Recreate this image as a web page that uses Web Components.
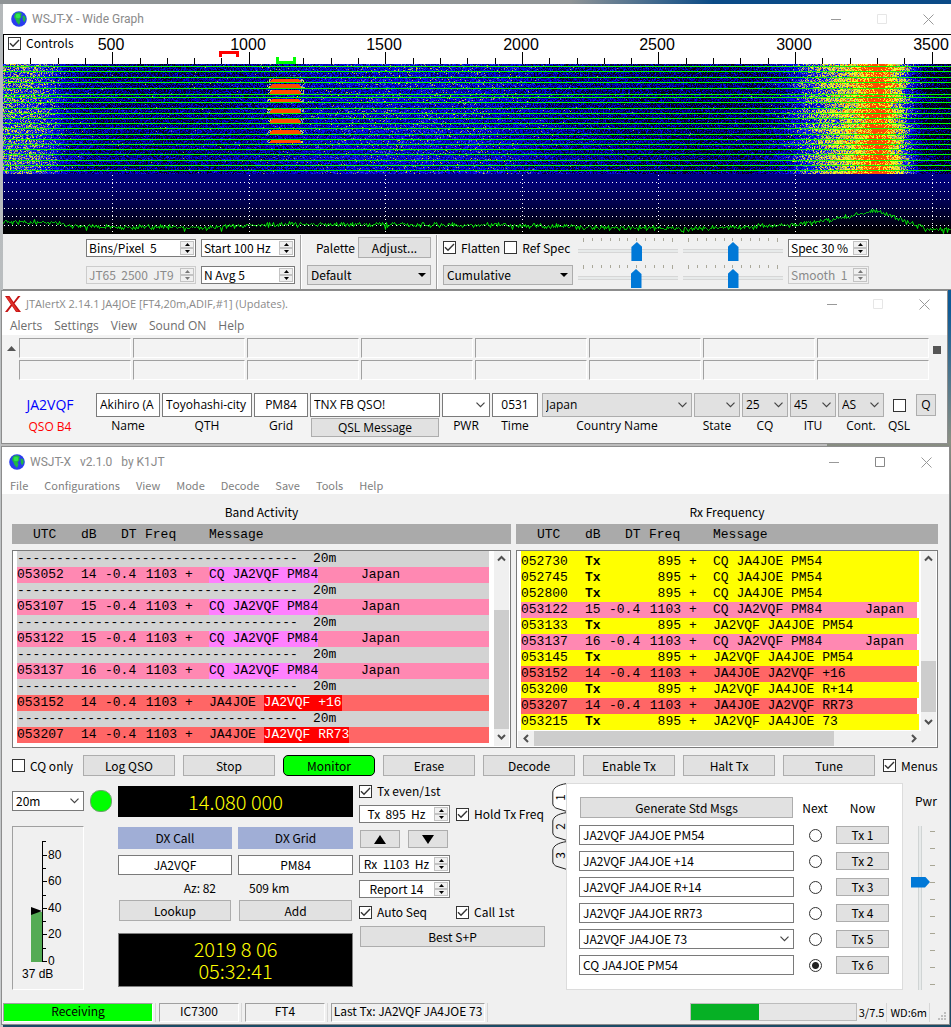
<!DOCTYPE html>
<html lang="en">
<head>
<meta charset="utf-8">
<title>WSJT-X station desktop</title>
<style>
  html { min-height: 100%; background: linear-gradient(90deg, #8f9496 0, #8f9496 60%, #0b4b87 75%, #0b4b87 100%) top / 100% 4px no-repeat, linear-gradient(#b4b8ba, #c8cbcd) left / 3px 100% no-repeat, linear-gradient(180deg, #1a5d95 0, #0d5a96 30%, #8a8f83 43%, #5e6d70 50%, #123c55 75%, #1c4b66 100%); }
  body { margin: 0; padding-top: 4px; font: 12px/16px "Noto Sans CJK JP", sans-serif; color: #000; }
  wide-graph, jt-alert, wsjtx-main { display: block; }
  wide-graph { margin-left: 3px; }
  jt-alert { margin: 0 3px 0 1px; }
  wsjtx-main { margin: 0 1px 2px 1px; padding-top: 2px; background: linear-gradient(90deg, #bcbcbc 0, #bcbcbc 87%, transparent 87%); }
</style>
</head>
<body>
<wide-graph></wide-graph>
<jt-alert></jt-alert>
<wsjtx-main></wsjtx-main>

<script>
const BASE = `*{box-sizing:border-box} button,input,select{font:inherit;color:inherit;margin:0} button{cursor:default}`;

function define(tag, markup, setup) {
  const tpl = document.createElement('template');
  customElements.define(tag, class extends HTMLElement {
    constructor() { super(); this.attachShadow({ mode: 'open' }); }
    connectedCallback() {
      if (this.ready) return;
      this.ready = true;
      tpl.innerHTML = `<style>${BASE}</style>` + (typeof markup === 'function' ? markup(this) : markup);
      this.shadowRoot.append(tpl.content.cloneNode(true));
      if (setup) setup(this, this.shadowRoot);
    }
  });
}
const attr = (el, name, fallback = '') => el.hasAttribute(name) ? el.getAttribute(name) : fallback;

/* ---------- basic controls ---------- */

define('push-button', `
<style>
  :host { display: block; height: 21px; }
  button { display: block; width: 100%; height: 100%; padding: 0; border: 1px solid #adadad; background: #e1e1e1; line-height: 16px; text-align: center; white-space: nowrap; }
  :host([active]) button { background: #0f0; border-color: #000; border-radius: 5px; }
</style>
<button type="button"><slot></slot></button>`);

define('check-box', el => `
<style>
  :host { display: inline-flex; }
  label { display: flex; align-items: center; gap: 5px; white-space: nowrap; }
  input { appearance: none; flex: none; width: 13px; height: 13px; border: 1px solid #333; background: #fff; }
  input:checked { background: #fff url("data:image/svg+xml,%3Csvg xmlns='http://www.w3.org/2000/svg' viewBox='0 0 11 11'%3E%3Cpath d='M1 5.2 4 8.2 10 2' fill='none' stroke='%23333' stroke-width='1.4'/%3E%3C/svg%3E"); }
</style>
<label><input type="checkbox" ${el.hasAttribute('checked') ? 'checked' : ''} ${el.hasAttribute('name') ? `aria-label="${attr(el, 'name')}"` : ''}><slot></slot></label>`);

define('text-box', el => `
<style>
  :host { display: block; height: 20px; }
  input { display: block; width: 100%; height: 100%; padding: 0 3px 1px; border: 1px solid #7a7a7a; background: #fff; text-align: ${attr(el, 'align', 'left')}; outline: 0; }
</style>
<input type="text" aria-label="${attr(el, 'name')}" value="${attr(el, 'value')}">`);

define('spin-box', el => `
<style>
  :host { display: flex; height: 18px; border: 1px solid #7a7a7a; background: #fff; box-sizing: border-box; }
  :host([off]) { border-color: #ccc; background: #f0f0f0; color: #8a8a8a; }
  input { flex: 1; min-width: 0; width: 0; border: 0; padding: 0 2px; background: none; outline: 0; text-align: ${attr(el, 'align', 'left')}; }
  div { display: flex; flex-direction: column; width: 14px; margin: 1px; }
  button { flex: 1; display: flex; align-items: center; justify-content: center; padding: 0; border: 1px solid #c3c3c3; background: #f0f0f0; }
  svg { display: block; width: 5px; height: 3px; }
</style>
<input type="text" aria-label="${attr(el, 'name')}" value="${attr(el, 'value')}" ${el.hasAttribute('off') ? 'disabled' : ''}>
<div>
  <button type="button" aria-label="Increase"><svg viewBox="0 0 5 3"><path d="M2.5 0 5 3H0z" fill="${el.hasAttribute('off') ? '#777' : '#000'}"/></svg></button>
  <button type="button" aria-label="Decrease"><svg viewBox="0 0 5 3"><path d="M0 0h5L2.5 3z" fill="${el.hasAttribute('off') ? '#777' : '#000'}"/></svg></button>
</div>`);

define('combo-box', el => `
<style>
  :host { display: grid; height: 20px; align-items: center; }
  select, svg { grid-area: 1 / 1; }
  select { appearance: none; width: 100%; height: 100%; min-width: 0; padding: 0 3px; border: 1px solid #7a7a7a; border-radius: 0; background: #fff; outline: 0; }
  :host([grey]) select { background: #e1e1e1; border-color: #adadad; }
  svg { justify-self: end; margin-right: 5px; pointer-events: none; }
</style>
<select aria-label="${attr(el, 'name')}"><option>${attr(el, 'value')}</option></select>
${el.hasAttribute('solid')
  ? `<svg width="8" height="4" viewBox="0 0 8 4"><path d="M0 0h8L4 4z"/></svg>`
  : `<svg width="9" height="6" viewBox="0 0 9 6"><path d="M.5.7l4 4 4-4" fill="none" stroke="#444" stroke-width="1.2"/></svg>`}`);

define('tick-slider', el => `
<style>
  :host { display: block; width: 100px; height: 27px; padding-top: 4px; box-sizing: border-box; }
  .ticks { display: flex; justify-content: space-between; height: 4px; padding: 0 5px; }
  .ticks i { width: 1px; height: 3px; background: #aaa89a; }
  .ticks i:first-child, .ticks i:last-child { height: 4px; }
  input { appearance: none; display: block; width: 100%; height: 19px; background: linear-gradient(#d6d6d6 0 1px, #e7eaea 1px 3px, #d6d6d6 3px) 0 7px / 100% 4px no-repeat; }
  input::-webkit-slider-runnable-track { height: 19px; }
  input::-webkit-slider-thumb { appearance: none; width: 11px; height: 19px; background: #0078d7; clip-path: polygon(50% 0, 100% 5px, 100% 100%, 0 100%, 0 5px); }
</style>
<div class="ticks">${'<i></i>'.repeat(11)}</div>
<input type="range" min="0" max="100" value="${attr(el, 'value')}" aria-label="${attr(el, 'name')}">`);

define('power-slider', el => `
<style>
  :host { display: flex; height: 164px; }
  input { appearance: none; writing-mode: vertical-lr; direction: rtl; width: 19px; height: 164px; margin: 0; background: linear-gradient(90deg, #d0d4d4 0 1px, #e7eaea 1px 3px, #d0d4d4 3px) 7px 0 / 4px 100% no-repeat; }
  input::-webkit-slider-runnable-track { width: 19px; }
  input::-webkit-slider-thumb { appearance: none; width: 19px; height: 11px; background: #0078d7; clip-path: polygon(0 0, 14px 0, 100% 50%, 14px 100%, 0 100%); }
  .ticks { display: flex; flex-direction: column; justify-content: space-between; padding: 5px 0; }
  .ticks i { width: 5px; height: 1px; background: #a8a695; }
</style>
<input type="range" min="0" max="100" value="${attr(el, 'value')}" aria-label="Pwr">
<div class="ticks">${'<i></i>'.repeat(10)}</div>`);

define('scroll-bar', el => {
  const v = el.hasAttribute('vertical');
  const d = v ? ['M1 5.5 4.5 2 8 5.5', 'M1 2 4.5 5.5 8 2'] : ['M6 1 2.5 4.5 6 8', 'M3 1 6.5 4.5 3 8'];
  const b = (p, n) => `<button type="button" aria-label="${n}"><svg width="9" height="9" viewBox="0 0 9 9"><path d="${p}" fill="none" stroke="#505050" stroke-width="2"/></svg></button>`;
  return `
<style>
  :host { display: flex; flex-direction: ${v ? 'column' : 'row'}; ${v ? 'width' : 'height'}: 15px; background: #f0f0f0; }
  button { display: flex; align-items: center; justify-content: center; flex: none; width: ${v ? 15 : 16}px; height: ${v ? 17 : 15}px; padding: 0; border: 0; background: none; }
  .before { flex: ${attr(el, 'before')}; } .thumb { flex: ${attr(el, 'thumb')}; background: #cdcdcd; } .after { flex: ${attr(el, 'after')}; }
</style>
${b(d[0], 'Back')}<div class="before"></div><div class="thumb"></div><div class="after"></div>${b(d[1], 'Forward')}`;
});

define('globe-icon', `
<style>:host { display: block; width: 16px; height: 16px; } svg { display: block; }</style>
<svg width="16" height="16" viewBox="0 0 16 16"><circle cx="8" cy="8" r="7.8" fill="#2a3cf0"/>
<path d="M4 2.5Q7 .5 9.5 1.5L11 3 10 4.5 10.5 6 8.5 8.5 9.5 10.5 8 14 5.5 11 4.5 8.5 3 6z" fill="#1fb844"/>
<path d="M11.5 4.5l2.5.5.8 3-1.5 3.500L11.8 9z" fill="#1db548"/><circle cx="7" cy="5" r="2.3" fill="#2fe64c"/></svg>`);

define('app-window', el => `
<style>
  :host { display: block; border: 1px solid #8d8d8d; background: #fff; box-sizing: border-box; }
  header { display: flex; align-items: center; height: ${attr(el, 'bar', '30')}px; }
  h1 { flex: 1; margin: 0 0 0 5px; font: 12px/16px Roboto, sans-serif; color: #8a8a8a; white-space: pre; }
  :host([small]) h1 { font: 11px/16px "Open Sans", sans-serif; }
  .icon { margin-left: ${attr(el, 'inset', '7')}px; }
  header button { display: flex; align-items: center; justify-content: center; width: 46px; height: 24px; padding: 0; border: 0; background: none; }
  svg { display: block; fill: none; stroke: #999; }
</style>
<header>
  <span class="icon"><slot name="icon"></slot></span>
  <h1>${attr(el, 'heading')}</h1>
  <button type="button" aria-label="Minimize"><svg width="11" height="11"><path d="M0 5.5h10"/></svg></button>
  <button type="button" aria-label="Maximize"><svg width="11" height="11"><path d="M.5.5h9v9h-9z" ${el.hasAttribute('fixed') ? 'stroke="#e6e6e6"' : 'stroke="#888"'}/></svg></button>
  <button type="button" aria-label="Close"><svg width="11" height="11"><path d="M.5.5l10 10M10.5.5l-10 10"/></svg></button>
</header>
<slot name="menu"></slot>
<slot></slot>`);

define('menu-bar', el => `
<style>
  :host { display: block; }
  nav { display: flex; gap: ${attr(el, 'gap')}px; height: ${attr(el, 'height')}px; line-height: ${attr(el, 'height')}px; font-size: ${attr(el, 'size')}px; padding-left: 8px; color: ${attr(el, 'tint')}; }
  a { color: inherit; text-decoration: none; white-space: nowrap; }
</style>
<nav>${attr(el, 'items').split('|').map(t => `<a href="#">${t}</a>`).join('')}</nav>`);

/* ---------- wide graph ---------- */

const PX_PER_HZ = 0.2731;
const hz = f => Math.round((f - 100) * PX_PER_HZ);

define('frequency-scale', () => {
  let marks = '';
  for (let f = 200; f <= 3500; f += 100) {
    const major = f % 500 === 0;
    marks += `<path d="M${hz(f)}.5 ${major ? 17 : 23}V29" stroke="#000"/>`;
    if (major) marks += `<text x="${hz(f) - 1}" y="15" text-anchor="middle">${f}</text>`;
  }
  return `
<style>
  :host { display: grid; height: 29px; background: #fff; overflow: hidden; border-left: 1px solid #000; }
  svg, check-box { grid-area: 1 / 1; }
  svg { display: block; width: 100%; height: 29px; margin-left: -1px; }
  text { font: 16px "Liberation Sans", sans-serif; }
  check-box { align-self: start; justify-self: start; padding-left: 4px; }
</style>
<svg>${marks}<path d="M217.5 22v-4.5h17V22" fill="none" stroke="#f00" stroke-width="3"/><path d="M274.5 22v5.5h17V22" fill="none" stroke="#0f0" stroke-width="3"/></svg>
<check-box checked>Controls</check-box>`;
});

define('water-fall', `
<style>:host { display: block; background: #000; } canvas { display: block; }</style>
<canvas height="170"></canvas>`, (el, root) => {
  const cv = root.querySelector('canvas');
  const W = cv.width = el.clientWidth, H = 110;
  const g = cv.getContext('2d');
  let seed = 20190806;
  const rnd = () => (seed = (seed * 1664525 + 1013904223) >>> 0) / 4294967296;
  const lerp = (pts, x) => {
    for (let i = 1; i < pts.length; i++) if (x <= pts[i][0]) {
      const [a, p] = pts[i - 1], [b, q] = pts[i];
      return p + (q - p) * (x - a) / (b - a);
    }
    return pts[pts.length - 1][1];
  };
  const level = [[0, .55], [30, .54], [48, .47], [62, .33], [90, .27], [160, .25], [240, .28], [300, .34], [380, .4], [480, .38], [560, .29], [700, .22], [760, .24], [782, .32], [800, .48], [820, .6], [838, .69], [852, .77], [862, .88], [872, .99], [880, .96], [888, .81], [897, .67], [907, .45], [920, .2], [948, .14]];
  const palette = [[0, [0, 0, 0]], [.15, [0, 0, 30]], [.32, [0, 0, 170]], [.52, [12, 24, 255]], [.57, [70, 90, 200]], [.61, [165, 165, 100]], [.7, [205, 205, 70]], [.76, [250, 245, 40]], [.86, [255, 250, 30]], [.88, [255, 90, 0]], [1, [255, 75, 0]]];
  const colour = t => {
    for (let i = 1; i < palette.length; i++) if (t <= palette[i][0]) {
      const [a, p] = palette[i - 1], [b, q] = palette[i], k = (t - a) / (b - a);
      return p.map((c, n) => c + (q[n] - c) * k);
    }
    return palette[palette.length - 1][1];
  };
  const img = g.createImageData(W, H);
  for (let y = 0; y < H; y++) {
    const row = .02 * Math.sin(y / 2.4);
    for (let x = 0; x < W; x++) {
      const l = lerp(level, x);
      const n = (rnd() + rnd() + rnd() - 1.5) * .22;
      const spike = rnd() > .96 ? .14 : 0;
      const c = colour(Math.max(0, Math.min(1, l + row * (x > 760 ? 2.5 : 1) + n + spike)));
      const i = (y * W + x) * 4;
      img.data[i] = c[0]; img.data[i + 1] = c[1]; img.data[i + 2] = c[2]; img.data[i + 3] = 255;
    }
  }
  g.putImageData(img, 0, 0);
  const bursts = [[15, 3], [20, 4], [26, 4], [35, 3], [45, 4], [55, 4], [66, 4], [75, 4]];
  for (const [y, h] of bursts) for (let r = 0; r < h; r++) {
    const grow = Math.min(r, 2) * 2;
    for (let x = 264; x < 301; x++) if (rnd() > .5) { g.fillStyle = rnd() > .5 ? '#d8d850' : '#8a98c0'; g.fillRect(x, y + r, 1, 1); }
    g.fillStyle = '#ff4a00';
    g.fillRect(269 - grow / 2, y + r, 27 + grow, 1);
  }
  g.fillStyle = '#0f0';
  for (const y of [2, 7, 13, 18, 24, 30, 33, 38, 44, 49, 54, 59, 64, 70, 75, 80, 85, 90, 96, 101, 106]) g.fillRect(0, y, W, 1);
  const fade = g.createLinearGradient(0, 110, 0, 170);
  fade.addColorStop(0, '#000084'); fade.addColorStop(.5, '#00004a'); fade.addColorStop(.95, '#000'); fade.addColorStop(1, '#000');
  g.fillStyle = fade; g.fillRect(0, 110, W, 60);
  g.fillStyle = '#fff';
  for (const y of [118, 127, 135, 144, 152, 161]) for (let x = 1; x < W; x += 4) g.fillRect(x, y, 1, 1);
  for (let f = 500; f < 5000; f += 500) for (let y = 111; y < 168; y += 4) g.fillRect(hz(f), y, 1, 1);
  const curve = [[0, 157], [55, 158], [68, 162], [200, 163], [260, 160], [380, 160], [520, 161], [600, 163], [700, 164], [790, 160], [820, 157], [850, 151], [872, 146], [885, 150], [905, 158], [925, 165], [948, 165]];
  g.strokeStyle = '#00f000'; g.lineWidth = 1; g.beginPath();
  for (let x = 0; x < W; x++) g.lineTo(x + .5, Math.round(lerp(curve, x) + (rnd() + rnd() - 1) * 3 + (rnd() > .97 ? 3 : 0)) + .5);
  g.stroke();
});

define('wide-graph', `
<style>
  app-window { border-width: 0 0 1px; }
  .plot { border-top: 1px solid #000; }
  .controls { display: flex; align-items: stretch; background: #f0f0f0; height: 55px; padding-left: 83px; }
  .pair { display: grid; grid-template-rows: 27px 27px; align-items: center; }
  .line { display: flex; align-items: center; }
  .bar { width: 2px; margin: 1px 5px 0; border-left: 1px solid #a0a0a0; border-right: 1px solid #fff; }
</style>
<app-window heading="WSJT-X - Wide Graph" inset="8" fixed>
  <globe-icon slot="icon"></globe-icon>
  <div class="plot">
    <frequency-scale></frequency-scale>
    <water-fall></water-fall>
  </div>
  <div class="controls">
    <div class="pair" style="width:110px">
      <spin-box name="Bins per pixel" value="Bins/Pixel  5"></spin-box>
      <spin-box name="Split" value="JT65  2500  JT9" off></spin-box>
    </div>
    <div class="pair" style="width:94px;margin-left:5px">
      <spin-box name="Start" value="Start 100 Hz"></spin-box>
      <spin-box name="Average" value="N Avg 5"></spin-box>
    </div>
    <div class="bar"></div>
    <div class="pair" style="width:124px">
      <div class="line" style="justify-content:space-between;padding-left:9px"><span>Palette</span><push-button style="width:73px">Adjust...</push-button></div>
      <combo-box name="Palette" value="Default" grey solid></combo-box>
    </div>
    <div class="bar"></div>
    <div class="pair" style="width:130px">
      <div class="line" style="gap:4px"><check-box checked>Flatten</check-box><check-box>Ref Spec</check-box></div>
      <combo-box name="Spectrum" value="Cumulative" grey solid></combo-box>
    </div>
    <div class="pair" style="margin-left:5px">
      <tick-slider name="Waterfall gain" value="60"></tick-slider>
      <tick-slider name="Spectrum gain" value="59"></tick-slider>
    </div>
    <div class="pair" style="margin-left:5px">
      <tick-slider name="Waterfall zero" value="50"></tick-slider>
      <tick-slider name="Spectrum zero" value="50"></tick-slider>
    </div>
    <div class="pair" style="width:81px;margin-left:5px">
      <spin-box name="Spec" value="Spec 30 %"></spin-box>
      <spin-box name="Smooth" value="Smooth  1" off></spin-box>
    </div>
  </div>
</app-window>`);

/* ---------- JTAlert ---------- */

define('form-field', el => `
<style>
  :host { display: flex; flex-direction: column; align-items: stretch; flex: none; }
  .control { height: 24px; display: grid; align-items: center; }
  ::slotted(text-box), ::slotted(combo-box) { height: 24px; }
  .caption { height: 18px; line-height: 17px; text-align: center; white-space: nowrap; }
</style>
<div class="control"><slot></slot></div><div class="caption">${attr(el, 'caption')}</div>`);

define('jt-alert', `
<style>
  :host { font-family: "Open Sans", sans-serif; }
  .body { background: #f3f3f3; height: 108px; padding: 3px 6px 0 4px; }
  .calls { display: flex; gap: 2px; }
  .up { display: block; margin: 8px 1px 0; }
  .cells { flex: 1; display: grid; grid-template-columns: repeat(8, 1fr); gap: 2px; }
  .cells i { height: 20px; border: 1px solid; border-color: #a0a0a0 #fff #fff #a0a0a0; }
  .stop { width: 8px; height: 8px; margin: 8px 0 0 2px; background: #555; }
  .log { display: flex; gap: 2px; margin-top: 13px; }
  .who { width: 88px; text-align: center; padding-top: 3px; }
  .who b { display: block; font-weight: 400; font-size: 14px; color: #00f; line-height: 18px; }
  .who em { display: block; font-style: normal; color: #f00; line-height: 26px; }
  .msg { width: 130px; }
  .msg text-box { height: 24px; } .msg push-button { height: 19px; margin: 1px 1px 0; }
  .country { width: 150px; margin-left: 2px; }
  .q { width: 20px; height: 22px; margin: 1px 0 0 2px; }
</style>
<app-window heading="JTAlertX 2.14.1 JA4JOE [FT4,20m,ADIF,#1] (Updates)." bar="26" inset="3" fixed small>
  <svg slot="icon" width="16" height="16" viewBox="0 0 16 16" style="display:block"><path d="M0 0h4.5L8.5 6 13 0h2.5L9.5 7.5 16 16h-5L7 10 2.5 16H0L5.8 8.5z" fill="#c41212"/><path d="M1 1h3L13.5 15.5h-2z" fill="#e0302a"/></svg>
  <menu-bar slot="menu" gap="12" size="12" height="18" tint="#6d6d6d" items="Alerts|Settings|View|Sound ON|Help"></menu-bar>
  <div class="body">
    <div class="calls">
      <svg class="up" width="9" height="5" viewBox="0 0 9 5"><path d="M4.5 0 9 5H0z" fill="#555"/></svg>
      <div class="cells"><i></i><i></i><i></i><i></i><i></i><i></i><i></i><i></i><i></i><i></i><i></i><i></i><i></i><i></i><i></i><i></i></div>
      <div class="stop"></div>
    </div>
    <div class="log">
      <div class="who"><b>JA2VQF</b><em>QSO B4</em></div>
      <form-field caption="Name" style="width:64px"><text-box name="Name" value="Akihiro (A"></text-box></form-field>
      <form-field caption="QTH" style="width:90px"><text-box name="QTH" value="Toyohashi-city"></text-box></form-field>
      <form-field caption="Grid" style="width:54px"><text-box name="Grid" value="PM84" align="center"></text-box></form-field>
      <div class="msg"><text-box name="QSL text" value="TNX FB QSO!"></text-box><push-button>QSL Message</push-button></div>
      <form-field caption="PWR" style="width:48px"><combo-box name="PWR" value=""></combo-box></form-field>
      <form-field caption="Time" style="width:46px"><text-box name="Time" value="0531" align="center"></text-box></form-field>
      <form-field class="country" caption="Country Name"><combo-box name="Country Name" value="Japan" grey></combo-box></form-field>
      <form-field caption="State" style="width:46px"><combo-box name="State" value="" grey></combo-box></form-field>
      <form-field caption="CQ" style="width:46px"><combo-box name="CQ" value="25" grey></combo-box></form-field>
      <form-field caption="ITU" style="width:46px"><combo-box name="ITU" value="45" grey></combo-box></form-field>
      <form-field caption="Cont." style="width:46px"><combo-box name="Cont." value="AS" grey></combo-box></form-field>
      <form-field caption="QSL" style="width:26px"><check-box name="QSL" style="justify-self:center"></check-box></form-field>
      <push-button class="q">Q</push-button>
    </div>
  </div>
</app-window>`);

/* ---------- WSJT-X main window ---------- */

const BAND = [];
for (const [utc, db, msg, hit] of [['053052', 14], ['053107', 15], ['053122', 15], ['053137', 16], ['053152', 14, 'JA4JOE', 'JA2VQF +16'], ['053207', 14, 'JA4JOE', 'JA2VQF RR73']]) {
  BAND.push({ rule: true }, { utc, db, dt: '-0.4', f: 1103, msg, hit, kind: msg ? 'mine' : 'cq' });
}
const tx = (utc, m) => ({ utc, db: '<b>Tx</b>', dt: '', f: 895, msg: m, kind: 'tx' });
const RX = [
  tx('052730', 'CQ JA4JOE PM54'), tx('052745', 'CQ JA4JOE PM54'), tx('052800', 'CQ JA4JOE PM54'),
  { utc: '053122', db: 15, dt: '-0.4', f: 1103, msg: 'CQ JA2VQF PM84', kind: 'cq', land: 'Japan' },
  tx('053133', 'JA2VQF JA4JOE PM54'),
  { utc: '053137', db: 16, dt: '-0.4', f: 1103, msg: 'CQ JA2VQF PM84', kind: 'cq', land: 'Japan' },
  tx('053145', 'JA2VQF JA4JOE PM54'),
  { utc: '053152', db: 14, dt: '-0.4', f: 1103, msg: 'JA4JOE JA2VQF +16', kind: 'mine' },
  tx('053200', 'JA2VQF JA4JOE R+14'),
  { utc: '053207', db: 14, dt: '-0.4', f: 1103, msg: 'JA4JOE JA2VQF RR73', kind: 'mine' },
  tx('053215', 'JA2VQF JA4JOE 73')
];
function messageRow(r) {
  if (r.rule) return `<tr class="rule"><td colspan="7"><div><span>${'-'.repeat(36)}</span><span>20m</span></div></td></tr>`;
  const text = r.hit ? `${r.msg} <mark class="hit">${r.hit}</mark>` : r.msg || '<mark>CQ JA2VQF PM84</mark>';
  const land = r.land || (!r.msg ? 'Japan' : '');
  return `<tr class="${r.kind}"><td>${r.utc}</td><td>${r.db}</td><td>${r.dt}</td><td class="f">${r.f}</td><td>+</td>` +
    (r.kind === 'cq' ? `<td>${text}</td><td>${land}</td>` : `<td colspan="2">${text}</td>`) + '</tr>';
}

define('message-list', el => {
  const rx = el.hasAttribute('rx');
  return `
<style>
  :host { display: block; min-width: 0; font: 13px/16px "Liberation Mono", monospace; }
  h2 { margin: 0; padding-top: 6px; font: 12px/24px "Noto Sans CJK JP", sans-serif; text-align: center; }
  .head { display: grid; grid-template-columns: 64px 24px 40px 40px 24px 1fr; height: 20px; line-height: 22px; padding-left: 5px; background: #aaa; white-space: pre; }
  .head :first-child { padding-left: 16px; } .head :nth-child(3) { padding-left: 16px; }
  .box { display: grid; grid-template-columns: 1fr auto; grid-template-rows: 1fr auto; height: 198px; margin-top: 6px; padding: 0 1px 1px; border: 1px solid #7a7a7a; background: #fff; }
  .rows { padding-left: 3px; padding-right: ${rx ? 0 : 5}px; min-width: 0; overflow: hidden; }
  table { table-layout: fixed; width: 100%; border-collapse: collapse; }
  td { padding: 0; height: 16px; white-space: pre; }
  .f { text-align: right; padding-right: 8px; }
  .rule { background: #d3d3d3; } .cq { background: #ff88b2; } .mine { background: #ff6666; } .tx { background: #ff0; }
  .rule div { display: grid; grid-template-columns: 296px 1fr; }
  .rx tr:first-child td { height: 19px; padding-top: 3px; }
  .rx .cq td:last-child, .rx .mine td:last-child { border-right: 4px solid #fff; }
  mark { display: inline-block; height: 16px; background: #ff80ff; color: inherit; vertical-align: top; } .hit { background: #f00; color: #fff; }
  .corner { background: #f0f0f0; }
</style>
<h2>${attr(el, 'heading')}</h2>
<div class="head"><span>UTC</span><span>dB</span><span>DT</span><span>Freq</span><span></span><span>Message</span></div>
<div class="box ${rx ? 'rx' : ''}">
  <div class="rows"><table aria-label="${attr(el, 'heading')}"><colgroup><col style="width:64px"><col style="width:24px"><col style="width:40px"><col style="width:40px"><col style="width:24px"><col style="width:152px"><col></colgroup><tbody>${(rx ? RX : BAND).map(messageRow).join('')}</tbody></table></div>
  <scroll-bar vertical before="${rx ? 93 : 42}" thumb="${rx ? 51 : 120}" after="${rx ? 2 : 0}"></scroll-bar>
  ${rx ? '<scroll-bar before="0" thumb="299" after="71"></scroll-bar><div class="corner"></div>' : ''}
</div>`;
});

define('level-meter', () => {
  let s = '<path d="M29.5 15v120" stroke="#000"/>';
  for (let v = 0; v <= 90; v += 10) {
    const y = Math.round(134 - v * 1.33);
    s += `<path d="M29 ${y}.5h${v % 20 ? 4 : 5}" stroke="#000"/>`;
    if (v % 20 === 0) s += `<text x="35" y="${y + 4}">${v}</text>`;
  }
  return `
<style>
  :host { display: block; width: 72px; height: 164px; border: 1px solid; border-color: #a0a0a0 #fff #fff #a0a0a0; box-sizing: border-box; }
  svg { display: block; }
  text { font: 12px "Liberation Sans", sans-serif; }
</style>
<svg width="70" height="162" role="img" aria-label="Receive level">
  <path d="M18 85h11v50H18z" fill="#54ab54"/><path d="M18 80l11 4-11 4z"/>${s}<text x="9" y="151">37 dB</text>
</svg>`;
});

define('message-tabs', () => {
  const rows = ['JA2VQF JA4JOE PM54', 'JA2VQF JA4JOE +14', 'JA2VQF JA4JOE R+14', 'JA2VQF JA4JOE RR73', 'JA2VQF JA4JOE 73', 'CQ JA4JOE PM54'];
  return `
<style>
  :host { display: flex; flex: 1; }
  .tabs { width: 14px; }
  .tabs button { display: grid; width: 15px; height: 29px; padding: 0; border: 0; background: none; place-items: center; margin-right: -1px; }
  .tabs svg, .tabs span { grid-area: 1 / 1; }
  .tabs span { writing-mode: vertical-rl; transform: rotate(180deg); line-height: 14px; }
  .page { flex: 1; display: grid; grid-template-columns: 1fr 42px 53px; grid-template-rows: 22px; grid-auto-rows: 20px; row-gap: 6px; align-items: center; padding: 13px 13px 13px 12px; border: 1px solid #dcdcdc; background: #fff; }
  .page > span { text-align: center; }
  .page > push-button { height: 18px; }
  .page > .gen { height: 21px; margin: 0 1px; align-self: start; }
  input { appearance: none; justify-self: center; width: 13px; height: 13px; border: 1px solid #333; border-radius: 50%; background: #fff; }
  input:checked { background: radial-gradient(circle, #222 3px, #fff 4px); }
</style>
<div class="tabs" role="tablist">${[1, 2, 3].map(n => `<button type="button" role="tab"><svg width="15" height="29" viewBox="0 0 15 29"><path d="M15 .5C5 2 1.5 5 .8 9v12q0 2 3 4L15 28.5" fill="${n === 1 ? '#fff' : '#f0f0f0'}" stroke="#222"/></svg><span>${n}</span></button>`).join('')}</div>
<div class="page" role="tabpanel">
  <push-button class="gen">Generate Std Msgs</push-button><span>Next</span><span>Now</span>
  ${rows.map((t, i) => (i === 4 ? `<combo-box name="Tx 5 message" value="${t}"></combo-box>` : `<text-box name="Tx ${i + 1} message" value="${t}"></text-box>`) +
    `<input type="radio" name="next" aria-label="Next: Tx ${i + 1}" ${i === 5 ? 'checked' : ''}><push-button>Tx ${i + 1}</push-button>`).join('')}
</div>`;
});

define('status-bar', `
<style>
  :host { display: flex; align-items: center; gap: 2px; height: 34px; padding: 10px 1px 0; line-height: 14px; white-space: pre; }
  .cell { height: 19px; border: 1px solid; border-color: #a0a0a0 #fff #fff #a0a0a0; text-align: center; }
  .cell.go { background: #0f0; width: 150px; }
  .sep { width: 1px; height: 19px; background: #d7d7d7; margin-right: 1px; }
  .mode { width: 80px; } .last { width: 154px; }
  progress { appearance: none; width: 167px; height: 18px; margin-left: auto; border: 1px solid #bcbcbc; background: #e6e6e6; }
  progress::-webkit-progress-bar { background: #e6e6e6; } progress::-webkit-progress-value { background: #06b025; }
  .side { font-size: 11px; line-height: 18px; }
  .grip { align-self: flex-end; margin: 0 1px 3px 5px; }
</style>
<div class="cell go">Receiving</div><div class="sep"></div>
<div class="cell mode">IC7300</div><div class="sep"></div>
<div class="cell mode">FT4</div><div class="sep"></div>
<div class="cell last">Last Tx: JA2VQF JA4JOE 73</div><div class="sep"></div>
<progress max="7.5" value="3.1" aria-label="Sequence time"></progress>
<div class="side">3/7.5</div><div class="sep"></div><div class="side">WD:6m</div><div class="sep"></div>
<svg class="grip" width="9" height="9" fill="#bfbfbf"><path d="M6 0h2v2H6zM3 3h2v2H3zM6 3h2v2H6zM0 6h2v2H0zM3 6h2v2H3zM6 6h2v2H6z"/></svg>`);

define('wsjtx-main', `
<style>
  .body { background: #f0f0f0; }
  .lists { display: grid; grid-template-columns: 499fr 422fr; gap: 5px; padding: 0 11px 0 10px; }
  .actions { display: flex; align-items: center; gap: 8px; height: 21px; margin-top: 7px; padding: 0 11px 0 10px; }
  .actions check-box:first-child { width: 63px; }
  .actions check-box:last-child { width: 55px; }
  .actions push-button { flex: 1; }
  .lower { display: flex; margin-top: 7px; padding: 0 11px 0 10px; height: 207px; }
  .band { width: 106px; padding-top: 7px; }
  .band > div { display: flex; align-items: center; gap: 6px; height: 22px; margin-bottom: 14px; }
  .band combo-box { width: 72px; }
  .led { width: 22px; height: 22px; border: 1px solid #6fa06f; border-radius: 10px; background: #0f0; }
  .dx { width: 235px; padding-top: 3px; }
  .lcd { display: grid; place-content: center; height: 31px; background: #000; color: #ff0; font: 300 20px/22px "Noto Sans CJK JP", sans-serif; text-align: center; }
  .clock { height: 54px; margin-top: 12px; border: 1px solid #808080; }
  .two { display: grid; grid-template-columns: 114px 115px; gap: 6px; margin-top: 10px; text-align: center; }
  .two b { font-weight: 400; background: #a0aed6; line-height: 22px; }
  .two span { line-height: 13px; } .two span:nth-of-type(1) { text-align: right; padding-right: 16px; } .two span:nth-of-type(2) { text-align: left; padding-left: 11px; }
  .two push-button { margin: 0 1px; }
  .rx { display: flex; flex-direction: column; gap: 7px; width: 186px; margin: 1px 7px 0 6px; }
  .rx > div { display: flex; gap: 6px; height: 18px; align-items: center; }
  .rx > .tick { height: 14px; }
  .rx spin-box { width: 91px; } .rx .tick check-box:first-child { width: 91px; }
  .rx .arrows { gap: 8px; padding-left: 1px; } .arrows push-button { width: 40px; height: 18px; }
  .arrows svg { display: block; margin: auto; }
  .rx > push-button { margin: 0 0 0 1px; }
  .pwr { width: 27px; margin-left: 8px; }
  .pwr span { display: block; padding: 10px 0 17px 4px; }
</style>
<app-window heading="WSJT-X   v2.1.0   by K1JT">
  <globe-icon slot="icon"></globe-icon>
  <menu-bar slot="menu" gap="16" size="11" height="17" tint="#808080" items="File|Configurations|View|Mode|Decode|Save|Tools|Help"></menu-bar>
  <div class="body">
    <div class="lists">
      <message-list heading="Band Activity"></message-list>
      <message-list heading="Rx Frequency" rx></message-list>
    </div>
    <div class="actions">
      <check-box>CQ only</check-box>
      <push-button>Log QSO</push-button><push-button>Stop</push-button><push-button active>Monitor</push-button><push-button>Erase</push-button>
      <push-button>Decode</push-button><push-button>Enable Tx</push-button><push-button>Halt Tx</push-button><push-button>Tune</push-button>
      <check-box checked>Menus</check-box>
    </div>
    <div class="lower">
      <div class="band">
        <div><combo-box name="Band" value="20m"></combo-box><i class="led"></i></div>
        <level-meter></level-meter>
      </div>
      <div class="dx">
        <div class="lcd">14.080 000</div>
        <div class="two">
          <b>DX Call</b><b>DX Grid</b>
          <text-box name="DX Call" value="JA2VQF" align="center"></text-box><text-box name="DX Grid" value="PM84" align="center"></text-box>
          <span>Az: 82</span><span>509 km</span>
          <push-button>Lookup</push-button><push-button>Add</push-button>
        </div>
        <div class="lcd clock">2019 8 06<br>05:32:41</div>
      </div>
      <div class="rx">
        <div class="tick"><check-box checked>Tx even/1st</check-box></div>
        <div><spin-box name="Tx frequency" value="Tx  895  Hz" align="center"></spin-box><check-box checked>Hold Tx Freq</check-box></div>
        <div class="arrows">
          <push-button><svg width="12" height="9" viewBox="0 0 12 9"><path d="M6 0l6 9H0z"/></svg></push-button>
          <push-button><svg width="12" height="9" viewBox="0 0 12 9"><path d="M0 0h12L6 9z"/></svg></push-button>
        </div>
        <div><spin-box name="Rx frequency" value="Rx  1103  Hz" align="center"></spin-box></div>
        <div><spin-box name="Report" value="Report 14" align="center"></spin-box></div>
        <div class="tick"><check-box checked>Auto Seq</check-box><check-box checked>Call 1st</check-box></div>
        <push-button>Best S+P</push-button>
      </div>
      <message-tabs></message-tabs>
      <div class="pwr"><span>Pwr</span><power-slider value="67"></power-slider></div>
    </div>
    <status-bar></status-bar>
  </div>
</app-window>`);
</script>
</body>
</html>
